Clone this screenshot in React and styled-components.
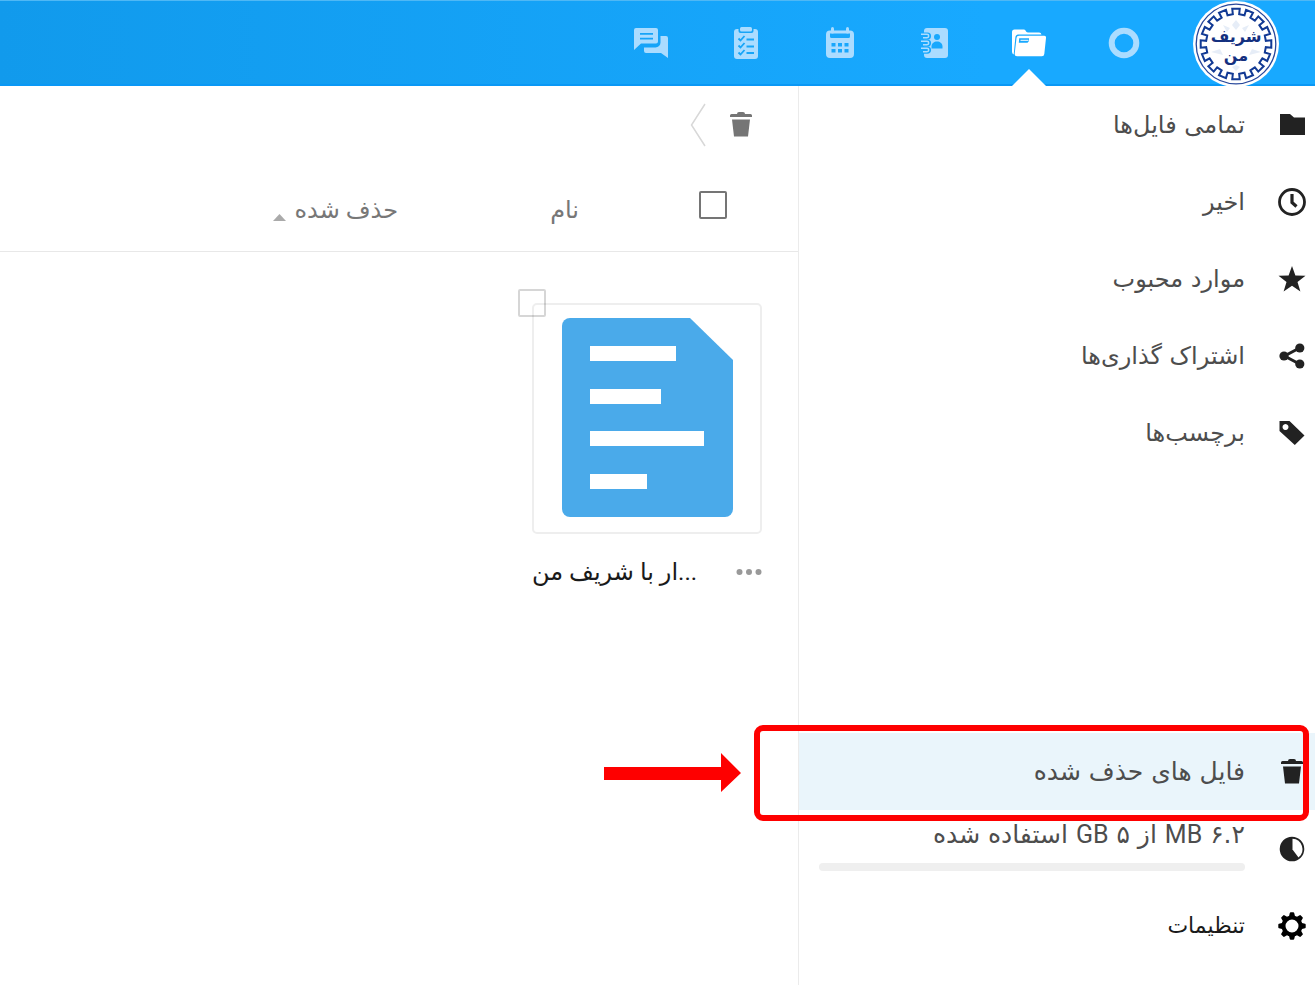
import React from 'react';
import styled, { createGlobalStyle } from 'styled-components';

const Global = createGlobalStyle`
  *, *::before, *::after { box-sizing: border-box; }
  body {
    margin: 0;
    background: #fff;
    color: #4d4d4d;
    font-family: Roboto, "DejaVu Sans", sans-serif;
    font-size: 24px;
    line-height: 32px;
  }
`;

const Page = styled.div`
  min-height: 100vh;
  display: flex;
  flex-direction: column;
  overflow: hidden;
`;

const Header = styled.header`
  height: 86px;
  flex: none;
  display: flex;
  align-items: center;
  padding-right: 36px;
  background: linear-gradient(90deg, #119aec 0%, #18a9ff 75%);
  box-shadow: inset 0 1px 0 #4fb8f5, inset 0 -2px 0 #0a98f5;
`;

const LogoLink = styled.a`
  display: block;
  width: 86px;
  height: 86px;
  margin-left: 22px;
`;

const AppMenu = styled.nav`
  display: grid;
  grid-template-columns: repeat(6, 1fr);
  width: 567px;
  height: 100%;
`;

const AppLink = styled.a`
  position: relative;
  display: flex;
  align-items: center;
  justify-content: center;
  color: ${(p) => (p.$active ? '#fff' : '#abdcff')};

  &::after {
    content: '';
    display: ${(p) => (p.$active ? 'block' : 'none')};
    position: absolute;
    bottom: 0;
    left: calc(50% - 17px);
    border: 17px solid transparent;
    border-top-width: 0;
    border-bottom-color: #fff;
  }
`;

const Body = styled.div`
  flex: 1;
  display: flex;
`;

const Sidebar = styled.aside`
  flex: none;
  width: 517px;
  display: flex;
  flex-direction: column;
  justify-content: space-between;
  padding-bottom: 21px;
  border-left: 1px solid #ebebeb;
`;

const NavList = styled.ul`
  list-style: none;
  margin: 0;
  padding: 0;
  font-family: "DejaVu Sans", sans-serif;
  font-size: ${(p) => (p.$large ? '25px' : '24px')};
`;

const NavItem = styled.li`
  position: relative;
`;

const NavLink = styled.a`
  display: flex;
  align-items: center;
  gap: 31px;
  height: 77px;
  padding: 0 7px 0 20px;
  color: #4d4d4d;
  background: ${(p) => (p.$active ? '#eaf5fb' : 'transparent')};
  text-decoration: none;
`;

const SettingsLink = styled(NavLink)`
  color: #1a1a1a;
  font-size: 22px;
`;

const IconBox = styled.span`
  flex: none;
  width: 32px;
  display: flex;
  justify-content: center;
  color: #222;
`;

const Quota = styled.span`
  flex: 1;
  display: flex;
  flex-direction: column;
  gap: 12px;
  padding-bottom: 8px;
`;

const Unit = styled.span`
  font-family: Roboto, sans-serif;
`;

const QuotaBar = styled.span`
  height: 8px;
  border-radius: 4px;
  background: #efefef;
`;

const Highlight = styled.span`
  position: absolute;
  top: -8px;
  bottom: -11px;
  left: -45px;
  right: 6px;
  border: 6px solid #fe0000;
  border-radius: 9px;
  pointer-events: none;
`;

const Arrow = styled.svg`
  position: absolute;
  top: 20px;
  left: -195px;
  pointer-events: none;
`;

const Main = styled.main`
  flex: 1;
  min-width: 0;
`;

const Toolbar = styled.div`
  height: 77px;
  display: flex;
  align-items: center;
  gap: 24px;
  padding-right: 46px;
`;

const IconLink = styled.a`
  display: flex;
  color: #757575;
`;

const HeadTable = styled.table`
  width: 100%;
  table-layout: fixed;
  border-collapse: collapse;
  color: #777;
`;

const HeadCell = styled.th`
  width: ${(p) => p.$width || 'auto'};
  height: 88px;
  padding: 6px 0 0;
  border-bottom: 1px solid #e8e8e8;
  text-align: right;
  vertical-align: middle;
  font-weight: 400;
`;

const CheckCell = styled(HeadCell)`
  padding: 0 71px 4px 0;
`;

const SortButton = styled.button`
  display: flex;
  align-items: center;
  gap: 8px;
  padding: 0;
  border: 0;
  background: none;
  color: inherit;
  font: inherit;
  cursor: pointer;
`;

const SortMark = styled.svg`
  margin-top: 16px;
`;

const Check = styled.input`
  appearance: none;
  display: block;
  width: 28px;
  height: 28px;
  margin: 0;
  border: 2px solid ${(p) => (p.$faint ? 'rgba(0, 0, 0, 0.16)' : '#757575')};
  border-radius: 2px;
`;

const FileGrid = styled.ul`
  list-style: none;
  display: flex;
  flex-wrap: wrap;
  gap: 36px;
  margin: 0;
  padding: 51px 36px;
`;

const FileCard = styled.li`
  position: relative;
  width: 230px;
`;

const CardCheck = styled.div`
  position: absolute;
  top: -14px;
  left: -14px;
`;

const Thumb = styled.a`
  display: flex;
  align-items: center;
  justify-content: center;
  height: 231px;
  border: 2px solid #eee;
  border-radius: 5px;
`;

const FileFoot = styled.div`
  display: flex;
  align-items: center;
  justify-content: space-between;
  margin-top: 22px;
  color: #1a1a1a;
`;

const FileName = styled.span`
  white-space: nowrap;
`;

const MoreButton = styled.button`
  display: flex;
  padding: 0;
  border: 0;
  background: none;
  color: #999;
  cursor: pointer;
`;

const TEETH = 16;

function polar(r, a) {
  return `${(43 + r * Math.sin(a)).toFixed(2)} ${(44 - r * Math.cos(a)).toFixed(2)}`;
}

function ringPath() {
  const step = (Math.PI * 2) / TEETH;
  const parts = [];
  for (let i = 0; i < TEETH; i += 1) {
    const a = i * step;
    parts.push(
      polar(30, a - step * 0.27),
      polar(35.5, a - step * 0.27),
      polar(35.5, a + step * 0.27),
      polar(30, a + step * 0.27)
    );
  }
  return `M${parts.join('L')}Z`;
}

const Logo = () => (
  <svg width="86" height="86" viewBox="0 0 86 86" role="img" aria-label="شریف من">
    <circle cx="43" cy="44" r="43" fill="#fff" />
    <circle cx="43" cy="44" r="39.8" fill="none" stroke="#27479b" strokeWidth="1.3" />
    <path d={ringPath()} fill="none" stroke="#123a94" strokeWidth="2" />
    <g fill="#e6edf7">
      <path d="M43 20l4 5-4 5-4-5zM30 25l7 3-3 4zM56 25l-7 3 3 4zM43 65l4 2-4 4-4-4zM18 52l9-3 3 6zM68 52l-9-3-3 6z" />
    </g>
    <g fill="#14307f" fontFamily="'DejaVu Sans', sans-serif" fontWeight="700" textAnchor="middle">
      <text x="43" y="42" fontSize="16">شریف</text>
      <text x="43" y="61" fontSize="16">من</text>
    </g>
  </svg>
);

const CircleIcon = () => (
  <svg width="32" height="32" viewBox="0 0 32 32">
    <circle cx="16" cy="16" r="12.3" fill="none" stroke="currentColor" strokeWidth="6" />
  </svg>
);

const FilesIcon = () => (
  <svg width="34" height="28" viewBox="0 0 34 28" fill="currentColor">
    <path d="M0 3a2.5 2.5 0 0 1 2.5-2.5H12c2 0 1.500 3 4 3H27a2.500 2.500 0 0 1 2.500 2H7C4 5.500 3.500 7 3.300 9L1.700 25.500A3 3 0 0 1 0 23z" />
    <path fillRule="evenodd" d="M7 6.800H32a2 2 0 0 1 2 2.300L32.300 25a2.500 2.500 0 0 1-2.500 2.300H5a2.300 2.300 0 0 1-2.300-2.500L4.500 9A2.500 2.500 0 0 1 7 6.800zM7.200 9.300L6.800 13.800H15.500L17 12V9.300z" />
    <path d="M8.500 10.800h8v1h-8z" />
  </svg>
);

const ContactsIcon = () => (
  <svg width="27" height="30" viewBox="0 0 27 30">
    <rect x="3" y="0" width="24" height="30" rx="3" fill="currentColor" />
    {[8, 15, 22].map((y) => (
      <g key={y}>
        <path d={`M2 ${y - 1.7}H6.500a1.800 1.800 0 0 1 0 3.600H2`} fill="none" stroke="#18a8fd" strokeWidth="3.6" />
        <path d={`M0 ${y - 1.7}H6a1.700 1.700 0 0 1 0 3.400H2`} fill="none" stroke="currentColor" strokeWidth="1.5" />
      </g>
    ))}
    <circle cx="16" cy="9" r="3" fill="#18a8fd" />
    <path d="M10.500 20.500v-2c0-3 2.500-5 5.500-5s5.500 2 5.500 5v2z" fill="#18a8fd" />
  </svg>
);

const CalendarIcon = () => (
  <svg width="28" height="32" viewBox="0 0 28 32" fill="currentColor">
    <path fillRule="evenodd" d="M4 3.500H24a4 4 0 0 1 4 4V27a4 4 0 0 1-4 4H4a4 4 0 0 1-4-4V7.500a4 4 0 0 1 4-4zM4 6.500V9.500a1.500 1.500 0 0 0 1.500 1.500h17A1.500 1.500 0 0 0 24 9.500V6.500zM5.500 16v3.500h4V16zM12 16v3.500h4V16zM18.500 16v3.500h4V16zM5.500 22v3.500h4V22zM12 22v3.500h4V22zM18.500 22v3.500h4V22z" />
    <rect x="5" y="0" width="3" height="6.5" rx="1.5" />
    <rect x="20" y="0" width="3" height="6.5" rx="1.5" />
  </svg>
);

const TasksIcon = () => (
  <svg width="24" height="32" viewBox="0 0 24 32">
    <rect x="0" y="2" width="24" height="30" rx="3" fill="currentColor" />
    <rect x="4.5" y="-2" width="15" height="8" rx="2" fill="#16a5f8" />
    <rect x="6" y="0" width="12" height="4.5" rx="1.5" fill="currentColor" />
    <path d="M4.500 11.500l2 2L10.500 9M12.500 12.500H20M4.500 18.500l2 2L10.500 16M12.500 19.500H20M4.500 25.500l2 2L10.500 23M12.500 26H20" fill="none" stroke="#16a5f8" strokeWidth="1.8" />
  </svg>
);

const ChatIcon = () => (
  <svg width="34" height="30" viewBox="0 0 34 30" fill="currentColor">
    <path fillRule="evenodd" d="M2 0H22a2 2 0 0 1 2 2V13.500a2 2 0 0 1-2 2H7L0 22V2a2 2 0 0 1 2-2zM6 5v1.800H19V5zM6 9.800v1.800H19V9.800z" />
    <path d="M26.500 8H32a2 2 0 0 1 2 2V30l-7-5H12a2 2 0 0 1-2-2V19.500H21.500a5 5 0 0 0 5-5z" />
  </svg>
);

const FolderIcon = () => (
  <svg width="25" height="21" viewBox="0 0 25 21" fill="currentColor">
    <path d="M0 0h10l4 3.500H25V21H0z" />
  </svg>
);

const ClockIcon = () => (
  <svg width="28" height="28" viewBox="0 0 28 28" fill="none" stroke="currentColor">
    <circle cx="14" cy="14" r="12.5" strokeWidth="2.8" />
    <path d="M14 6v8.500l4.500 4" strokeWidth="3.2" />
  </svg>
);

const StarIcon = () => (
  <svg width="28" height="26" viewBox="0 0 28 26" fill="currentColor">
    <path d="M14 0l3.400 9.500L27.500 9.700l-8 6.200L22.400 25.500 14 19.800 5.600 25.500l2.900-9.600-8-6.200 10.100-.2z" />
  </svg>
);

const ShareIcon = () => (
  <svg width="26" height="26" viewBox="0 0 26 26" fill="currentColor">
    <path d="M20.500 5L5.500 13l15 8" fill="none" stroke="currentColor" strokeWidth="3" />
    <circle cx="5" cy="13" r="4.6" />
    <circle cx="20.8" cy="5" r="4.6" />
    <circle cx="20.8" cy="21" r="4.6" />
  </svg>
);

const TagIcon = () => (
  <svg width="26" height="26" viewBox="0 0 26 26" fill="currentColor">
    <path fillRule="evenodd" d="M.5 1H10.500L25.500 15.500l-9.700 9.500L.5 11zM6.500 4a3 3 0 1 0 .01 0z" />
  </svg>
);

const TrashIcon = () => (
  <svg width="22" height="25" viewBox="0 0 22 25" fill="currentColor">
    <path d="M7 2a2 2 0 0 1 2-2h4a2 2 0 0 1 2 2h5.500a1.500 1.500 0 0 1 1.500 1.500V5H0V3.500A1.500 1.500 0 0 1 1.500 2zM2 7.500H20L18 24.500H4z" />
  </svg>
);

const PieIcon = () => (
  <svg width="26" height="26" viewBox="0 0 26 26">
    <circle cx="13" cy="13" r="11.3" fill="currentColor" stroke="currentColor" strokeWidth="2" />
    <path d="M13.500 2.800V13.500L19.500 21.500A10.500 10.500 0 0 0 13.500 2.800z" fill="#fff" />
  </svg>
);

const GearIcon = () => (
  <svg width="28" height="28" viewBox="0 0 28 28" fill="#000">
    <circle cx="14" cy="14" r="8.5" fill="none" stroke="#000" strokeWidth="4" />
    {[0, 45, 90, 135, 180, 225, 270, 315].map((a) => (
      <path key={a} d="M10.800 5L11.800 1a1 1 0 0 1 1-.7h2.400a1 1 0 0 1 1 .7L17.200 5z" transform={`rotate(${a} 14 14)`} />
    ))}
  </svg>
);

const DocIcon = () => (
  <svg width="172" height="200" viewBox="0 0 172 200">
    <path d="M9 0H129L172 42V191a8 8 0 0 1-8 8H9a8 8 0 0 1-8-8V8a8 8 0 0 1 8-8z" fill="#4aaaea" />
    <path d="M29 28h86v15H29zM29 71h71v15H29zM29 113h114v15H29zM29 156h57v15H29z" fill="#fff" />
  </svg>
);

const apps = [
  { name: 'داشبورد', Icon: CircleIcon },
  { name: 'فایل‌ها', Icon: FilesIcon, active: true },
  { name: 'مخاطبین', Icon: ContactsIcon },
  { name: 'تقویم', Icon: CalendarIcon },
  { name: 'وظایف', Icon: TasksIcon },
  { name: 'گفتگو', Icon: ChatIcon },
];

const views = [
  { label: 'تمامی فایل‌ها', Icon: FolderIcon },
  { label: 'اخیر', Icon: ClockIcon },
  { label: 'موارد محبوب', Icon: StarIcon },
  { label: 'اشتراک گذاری‌ها', Icon: ShareIcon },
  { label: 'برچسب‌ها', Icon: TagIcon },
];

export default function App() {
  return (
    <Page dir="rtl" lang="fa">
      <Global />
      <Header>
        <LogoLink href="#home"><Logo /></LogoLink>
        <AppMenu>
          {apps.map(({ name, Icon, active }) => (
            <AppLink key={name} href="#app" aria-label={name} $active={active}><Icon /></AppLink>
          ))}
        </AppMenu>
      </Header>
      <Body>
        <Sidebar>
          <NavList>
            {views.map(({ label, Icon }) => (
              <NavItem key={label}>
                <NavLink href="#view"><IconBox><Icon /></IconBox>{label}</NavLink>
              </NavItem>
            ))}
          </NavList>
          <NavList $large>
            <NavItem>
              <NavLink href="#trash" $active><IconBox><TrashIcon /></IconBox>فایل های حذف شده</NavLink>
              <Highlight />
              <Arrow width="138" height="40" viewBox="0 0 138 40">
                <path d="M0 14H117V0L137 20L117 39V27H0z" fill="#fe0000" />
              </Arrow>
            </NavItem>
            <NavItem>
              <NavLink href="#quota">
                <IconBox><PieIcon /></IconBox>
                <Quota>
                  <span>۶.۲ <Unit>MB</Unit> از ۵ <Unit>GB</Unit> استفاده شده</span>
                  <QuotaBar />
                </Quota>
              </NavLink>
            </NavItem>
            <NavItem>
              <SettingsLink href="#settings"><IconBox><GearIcon /></IconBox>تنظیمات</SettingsLink>
            </NavItem>
          </NavList>
        </Sidebar>
        <Main>
          <Toolbar>
            <IconLink href="#trash" aria-label="فایل های حذف شده"><TrashIcon /></IconLink>
            <svg width="16" height="44" viewBox="0 0 16 44" fill="none" stroke="#d8d8d8" strokeWidth="1.5">
              <path d="M15 1L1.500 22L15 43" />
            </svg>
          </Toolbar>
          <HeadTable>
            <thead>
              <tr>
                <CheckCell $width="219px"><Check type="checkbox" aria-label="انتخاب همه" /></CheckCell>
                <HeadCell $width="181px">نام</HeadCell>
                <HeadCell>
                  <SortButton>
                    حذف شده
                    <SortMark width="13" height="7" viewBox="0 0 13 7"><path d="M0 7L6.500 0L13 7z" fill="#aaa" /></SortMark>
                  </SortButton>
                </HeadCell>
              </tr>
            </thead>
          </HeadTable>
          <FileGrid>
            <FileCard>
              <Thumb href="#file" aria-label="ار با شریف من"><DocIcon /></Thumb>
              <CardCheck><Check type="checkbox" aria-label="انتخاب فایل" $faint /></CardCheck>
              <FileFoot>
                <MoreButton aria-label="بیشتر">
                  <svg width="26" height="8" viewBox="0 0 26 8" fill="currentColor">
                    <circle cx="3.5" cy="4" r="3" /><circle cx="13" cy="4" r="3" /><circle cx="22.5" cy="4" r="3" />
                  </svg>
                </MoreButton>
                <FileName>...ار با شریف من</FileName>
              </FileFoot>
            </FileCard>
          </FileGrid>
        </Main>
      </Body>
    </Page>
  );
}
